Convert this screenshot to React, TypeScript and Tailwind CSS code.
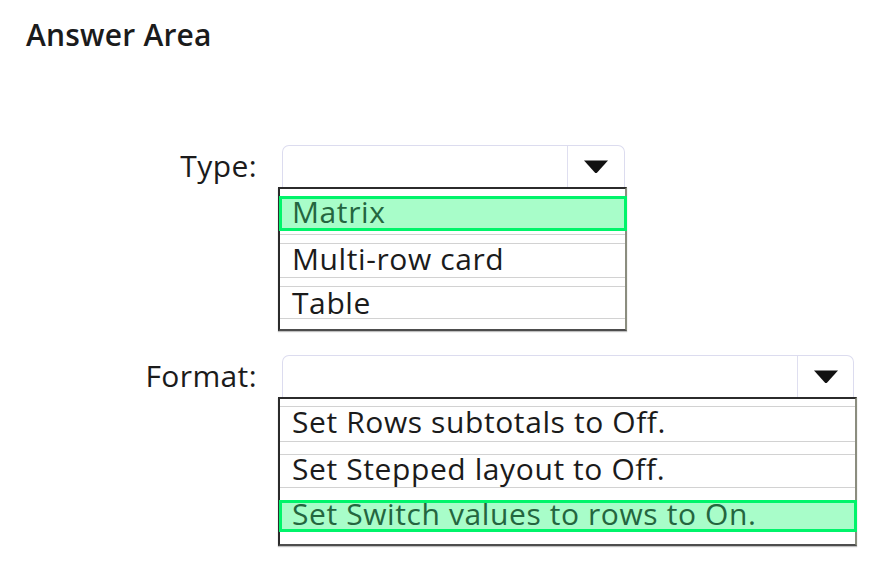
import React from "react";

const font = "font-['Open_Sans','Noto_Sans',sans-serif]";

function Caret() {
  return (
    <svg width="26" height="15" viewBox="0 0 26 15" aria-hidden="true">
      <path d="M1 1.5 L25 1.5 L14.2 13.4 Q13 14.6 11.8 13.4 Z" fill="#111" />
    </svg>
  );
}

function SelectBox({ width, caretWidth }: { width: string; caretWidth: string }) {
  return (
    <div className={`ml-[4px] h-[42px] ${width} flex rounded-t-[7px] border border-b-0 border-[#dcdcef] bg-white`}>
      <div className="flex-1" />
      <div className={`${caretWidth} border-l border-[#dfdff0] flex items-center justify-center`}>
        <Caret />
      </div>
    </div>
  );
}

function Line() {
  return <div className="h-px bg-[#d2d2d2]" />;
}

function Item({ text, h, lift = "pb-[3px]" }: { text: string; h: string; lift?: string }) {
  return (
    <div
      className={`${h} ${lift} flex items-center pl-[12px] text-[30px] tracking-[0.6px] leading-none whitespace-nowrap`}
    >
      {text}
    </div>
  );
}

function Picked({ text, h, lift = "pb-[3px]" }: { text: string; h: string; lift?: string }) {
  return (
    <div
      className={`${h} ${lift} -ml-[1px] -mr-[2px] flex items-center pl-[10px] border-[3px] border-[#00f46a] bg-[#a8fdc9] text-[#24663f] text-[30px] tracking-[0.6px] leading-none whitespace-nowrap`}
    >
      {text}
    </div>
  );
}

function ListFrame({ width, children }: { width: string; children: React.ReactNode }) {
  return (
    <div
      className={`${width} border-2 border-t-[#2b2b2b] border-l-[#2b2b2b] border-r-[#8b8d7f] border-b-[#4d4d4d] shadow-[0_1px_1px_rgba(0,0,0,0.25)] bg-white`}
    >
      {children}
    </div>
  );
}

function Field({ label, children }: { label: string; children: React.ReactNode }) {
  return (
    <div className="flex items-start">
      <div className="w-[257px] h-[42px] flex items-center justify-end text-[30px] tracking-[0.4px] leading-none">
        {label}
      </div>
      <div className="ml-[21px] flex flex-col">{children}</div>
    </div>
  );
}

export default function App() {
  return (
    <div className={`w-[896px] h-[572px] bg-white text-[#1b1b1b] ${font}`}>
      <div className="pl-[26px] pt-[15px] text-[30px] font-semibold leading-[40px] tracking-[0.2px]">Answer Area</div>
      <div className="mt-[90px] flex flex-col gap-[24px]">
        <Field label="Type:">
          <SelectBox width="w-[343px]" caretWidth="w-[57px]" />
          <ListFrame width="w-[349px]">
            <div className="h-[7px]" />
            <Picked text="Matrix" h="h-[35px]" />
            <div className="h-[3px]" />
            <Line />
            <div className="h-[8px]" />
            <Line />
            <Item text="Multi-row card" h="h-[33px]" />
            <Line />
            <div className="h-[8px]" />
            <Line />
            <Item text="Table" h="h-[31px]" lift="pb-0" />
            <Line />
            <div className="h-[10px]" />
          </ListFrame>
        </Field>
        <Field label="Format:">
          <SelectBox width="w-[572px]" caretWidth="w-[56px]" />
          <ListFrame width="w-[579px]">
            <div className="h-[7px]" />
            <Line />
            <Item text="Set Rows subtotals to Off." h="h-[34px]" lift="pb-[5px]" />
            <Line />
            <div className="h-[12px]" />
            <Line />
            <Item text="Set Stepped layout to Off." h="h-[32px]" lift="pb-[5px]" />
            <Line />
            <div className="h-[12px]" />
            <Picked text="Set Switch values to rows to On." h="h-[32px]" lift="pb-[5px]" />
            <div className="h-[12px]" />
          </ListFrame>
        </Field>
      </div>
    </div>
  );
}
